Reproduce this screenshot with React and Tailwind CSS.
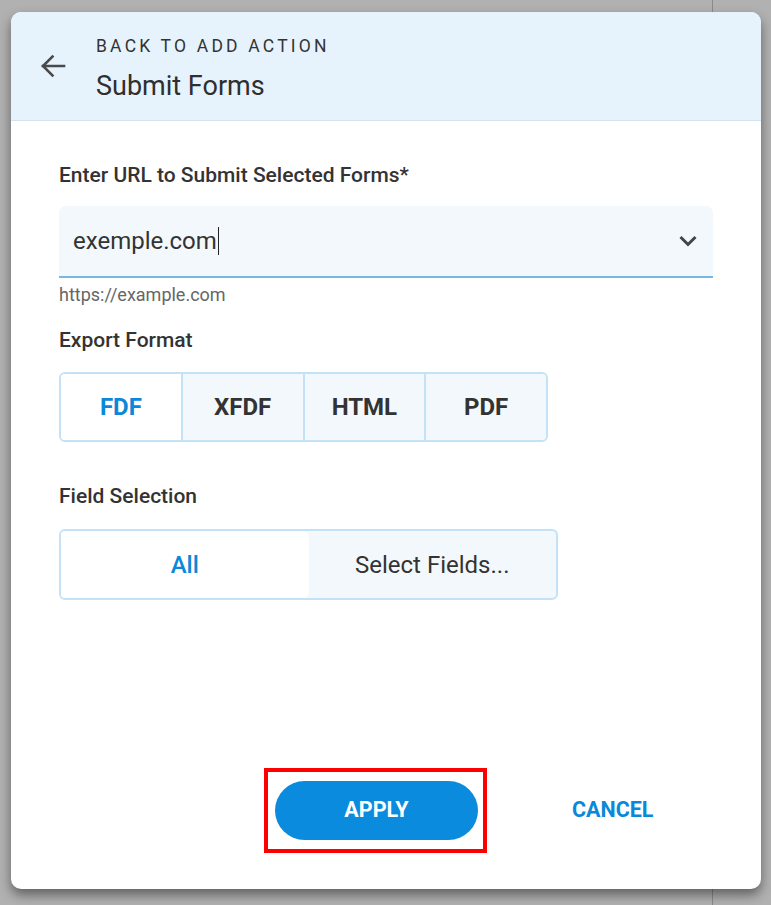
import React from 'react';

const formats = ['FDF', 'XFDF', 'HTML', 'PDF'];

export default function App() {
  return (
    <div className="relative h-[905px] w-full overflow-hidden bg-[#b1b1b1]" style={{ fontFamily: 'Roboto, "Liberation Sans", sans-serif' }}>
      {/* page behind the dialog */}
      <div className="h-full w-[713px] border-r border-[#8a8a8a]" />

      {/* Dialog */}
      <div className="absolute left-[11px] top-[12px] flex h-[877px] w-[750px] flex-col overflow-hidden rounded-[10px] bg-white shadow-[0_6px_12px_rgba(0,0,0,0.45)]">
        {/* Header */}
        <div className="flex h-[109px] shrink-0 items-center border-b border-[#d3e2ec] bg-[#e6f3fd]">
          <button className="ml-[29px] flex h-[26px] w-[26px] items-center justify-center text-[#4a4a4a]">
            <svg width="26" height="26" viewBox="0 0 26 26" fill="none" stroke="currentColor" strokeWidth="2.6" strokeLinecap="square">
              <path d="M3 13h21" />
              <path d="M12.5 3.5 3 13l9.5 9.5" />
            </svg>
          </button>
          <div className="ml-[30px] flex flex-col self-start pt-[23px]">
            <div className="text-[17.5px] leading-[22px] tracking-[3.2px] text-[#333]">BACK TO ADD ACTION</div>
            <div className="mt-[14px] text-[27px] leading-[30px] text-[#2f2f2f]">Submit Forms</div>
          </div>
        </div>

        {/* Body */}
        <div className="flex flex-1 flex-col px-[48px]">
          <div className="mt-[41px] text-[21px] font-medium leading-[26px] text-[#333]">Enter URL to Submit Selected Forms*</div>

          <div className="mt-[18px] flex h-[72px] items-center justify-between rounded-t-[7px] border-b-2 border-[#78b7e1] bg-[#f3f8fc] pl-[14px] pr-[15px]">
            <div className="flex items-center text-[24px] text-[#333]">
              exemple.com<span className="ml-[1px] inline-block h-[28px] w-[1.5px] bg-[#222]" />
            </div>
            <svg width="20" height="12" viewBox="0 0 20 12" fill="none" stroke="#444" strokeWidth="3">
              <path d="M2.5 2 10 9.5 17.5 2" />
            </svg>
          </div>
          <div className="mt-[6px] text-[18px] leading-[22px] text-[#666]">https://example.com</div>

          <div className="mt-[21px] text-[21px] font-medium leading-[26px] text-[#333]">Export Format</div>
          <div className="mt-[19px] flex h-[70px] w-[489px] overflow-hidden rounded-[6px] border-2 border-[#c4e2f6]">
            {formats.map((f, i) => (
              <div
                key={f}
                className={
                  'flex flex-1 items-center justify-center text-[24px] font-bold ' +
                  (i > 0 ? 'border-l-2 border-[#c4e2f6] bg-[#f3f8fc] text-[#333]' : 'bg-white text-[#0a88d9]')
                }
              >
                {f}
              </div>
            ))}
          </div>

          <div className="mt-[41px] text-[21px] font-medium leading-[26px] text-[#333]">Field Selection</div>
          <div className="mt-[20px] flex h-[71px] w-[499px] overflow-hidden rounded-[6px] border-2 border-[#c4e2f6] bg-[#f3f8fc]">
            <div className="flex flex-1 items-center justify-center rounded-r-[6px] bg-white text-[24px] font-medium text-[#0a88d9]">All</div>
            <div className="flex flex-1 items-center justify-center text-[24px] text-[#333]">Select Fields...</div>
          </div>

          {/* Actions */}
          <div className="mt-auto mb-[36px] flex items-center">
            <div className="ml-[205px] border-[4px] border-[#ff0000] py-[9px] pl-[7px] pr-[5px]">
              <button className="flex h-[59px] w-[203px] items-center justify-center rounded-full bg-[#0a8bdd] text-[21.5px] font-bold text-white">APPLY</button>
            </div>
            <button className="ml-[85px] text-[21.5px] font-bold text-[#0a88d9]">CANCEL</button>
          </div>
        </div>
      </div>
    </div>
  );
}
